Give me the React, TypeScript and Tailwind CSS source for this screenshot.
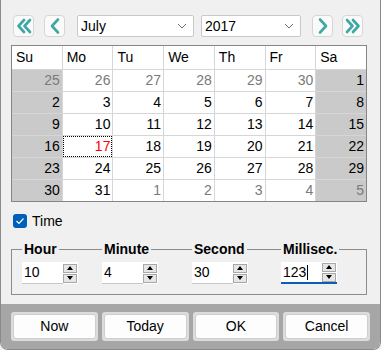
import React from 'react'

const FONT = { fontFamily: '"Liberation Sans", Arial, sans-serif' }

const days = ['Su', 'Mo', 'Tu', 'We', 'Th', 'Fr', 'Sa']

const weeks: { d: number; other?: boolean }[][] = [
  [25, 26, 27, 28, 29, 30].map((d) => ({ d, other: true })).concat([{ d: 1 }]),
  [2, 3, 4, 5, 6, 7, 8].map((d) => ({ d })),
  [9, 10, 11, 12, 13, 14, 15].map((d) => ({ d })),
  [16, 17, 18, 19, 20, 21, 22].map((d) => ({ d })),
  [23, 24, 25, 26, 27, 28, 29].map((d) => ({ d })),
  [{ d: 30 }, { d: 31 }].concat([1, 2, 3, 4, 5].map((d) => ({ d, other: true }))),
]

function Chevron({ dir, double }: { dir: 'left' | 'right'; double?: boolean }) {
  const flip = dir === 'right' ? 'scale(-1,1) translate(-18,0)' : undefined
  return (
    <svg width="18" height="18" viewBox="0 0 18 18">
      <g transform={flip} fill="none" stroke="#3fa8a4" strokeWidth="2.6" strokeLinecap="round" strokeLinejoin="round">
        {double ? (
          <>
            <polyline points="9,3 3.5,9 9,15" />
            <polyline points="15,3 9.5,9 15,15" />
          </>
        ) : (
          <polyline points="12,2.5 6,9 12,15.5" />
        )}
      </g>
    </svg>
  )
}

function NavButton({ dir, double }: { dir: 'left' | 'right'; double?: boolean }) {
  return (
    <button className="w-[21px] h-[22px] flex items-center justify-center rounded-[4px] border border-[#d6d6d6] bg-[#fafafa]">
      <Chevron dir={dir} double={double} />
    </button>
  )
}

function Select({ value, width }: { value: string; width: string }) {
  return (
    <div className={`${width} h-[22px] flex items-center justify-between bg-white border border-[#c9c9c9] rounded-[2px] pl-[3px] pr-[6px] text-[14px] text-black`}>
      <span>{value}</span>
      <svg width="10" height="6" viewBox="0 0 10 6">
        <polyline points="1,1 5,5 9,1" fill="none" stroke="#707070" strokeWidth="1" />
      </svg>
    </div>
  )
}

function SpinBox({ value, focused }: { value: string; focused?: boolean }) {
  return (
    <div className="flex items-center h-[22px] w-[56px] bg-white">
      <div
        className={`flex-1 h-full flex items-center pl-[2px] text-[14px] border-b ${
          focused ? 'border-b-2 border-[#0a5fb4]' : 'border-[#c8c8c8]'
        }`}
      >
        {value}
        {focused && <span className="w-px h-[15px] bg-black ml-px" />}
      </div>
      <div className={`flex flex-col gap-px h-full justify-center pr-px ${focused ? 'border-b-2 border-[#0a5fb4]' : ''}`}>
        <div className="w-[14px] h-[9px] flex items-center justify-center bg-[#e6e6e6] border border-[#a8a8a8]">
          <svg width="6" height="4" viewBox="0 0 6 4">
            <polygon points="0,4 3,0 6,4" fill="#000" />
          </svg>
        </div>
        <div className="w-[14px] h-[9px] flex items-center justify-center bg-[#e6e6e6] border border-[#a8a8a8]">
          <svg width="6" height="4" viewBox="0 0 6 4">
            <polygon points="0,0 6,0 3,4" fill="#000" />
          </svg>
        </div>
      </div>
    </div>
  )
}

function TimeField({ label, value, width, focused }: { label: string; value: string; width: string; focused?: boolean }) {
  return (
    <div className={`${width} flex flex-col`}>
      <span className="-mt-[9px] w-fit bg-[#f0f0f0] px-[2px] text-[14px] font-bold leading-[16px]">{label}</span>
      <div className="mt-[5px]">
        <SpinBox value={value} focused={focused} />
      </div>
    </div>
  )
}

export default function App() {
  return (
    <div className="w-[381px] h-[350px] bg-[#f0f0f0] text-black" style={FONT}>
      <div className="w-[381px] h-[350px] flex flex-col border-l border-r border-b border-[#8a8a8a] rounded-b-[8px] overflow-hidden">
        {/* navigation */}
        <div className="flex items-center pt-[15px] pl-[12px] h-[37px]">
          <NavButton dir="left" double />
          <div className="w-[10px]" />
          <NavButton dir="left" />
          <div className="w-[12px]" />
          <Select value="July" width="w-[117px]" />
          <div className="w-[7px]" />
          <Select value="2017" width="w-[100px]" />
          <div className="w-[11px]" />
          <NavButton dir="right" />
          <div className="w-[9px]" />
          <NavButton dir="right" double />
        </div>

        {/* calendar */}
        <div className="mt-[8px] ml-[10px] w-[356px] border border-[#858585] bg-[#d6d6d6]">
          <div className="grid grid-cols-7 gap-px">
            {days.map((d) => (
              <div key={d} className="h-[23px] bg-white flex items-center pl-[4px] text-[14px]">
                {d}
              </div>
            ))}
            {weeks.map((w, wi) =>
              w.map((c, ci) => {
                const weekend = ci === 0 || ci === 6
                const today = wi === 3 && ci === 1
                return (
                  <div
                    key={`${wi}-${ci}`}
                    className={`h-[21px] flex items-center justify-end pr-[2px] text-[14px] ${
                      weekend ? 'bg-[#cacaca]' : 'bg-white'
                    } ${c.other ? 'text-[#7a7a7a]' : today ? 'text-[#ff0000]' : 'text-black'} ${
                      today ? 'outline-1 outline-dotted outline-black -outline-offset-1' : ''
                    }`}
                  >
                    {c.d}
                  </div>
                )
              })
            )}
          </div>
        </div>

        {/* time toggle */}
        <div className="flex items-center mt-[12px] ml-[12px] h-[14px]">
          <div className="w-[14px] h-[14px] rounded-[3px] bg-[#005fb8] flex items-center justify-center">
            <svg width="10" height="8" viewBox="0 0 10 8">
              <polyline points="1.5,4 4,6.5 8.5,1.5" fill="none" stroke="#fff" strokeWidth="1.2" />
            </svg>
          </div>
          <span className="ml-[5px] text-[14px]">Time</span>
        </div>

        {/* time group */}
        <div className="mt-[21px] ml-[10px] w-[356px] h-[46px] border border-[#8c8c8c] flex pl-[10px]">
          <TimeField label="Hour" value="10" width="w-[80px]" />
          <TimeField label="Minute" value="4" width="w-[90px]" />
          <TimeField label="Second" value="30" width="w-[89px]" />
          <TimeField label="Millisec." value="123" width="w-[80px]" focused />
        </div>

        {/* footer */}
        <div className="mt-auto h-[45px] bg-[#a6a6a6] grid grid-cols-4 gap-[4px] px-[10px] pt-[8px] pb-[8px]">
          {['Now', 'Today', 'OK', 'Cancel'].map((b) => (
            <div key={b} className="bg-[#dcdcdc] p-[2px] rounded-[3px]">
              <button className="w-full h-full rounded-[3px] border border-[#cfcfcf] bg-[#fdfdfd] text-[14px] text-black flex items-center justify-center">
                {b}
              </button>
            </div>
          ))}
        </div>
      </div>
    </div>
  )
}
